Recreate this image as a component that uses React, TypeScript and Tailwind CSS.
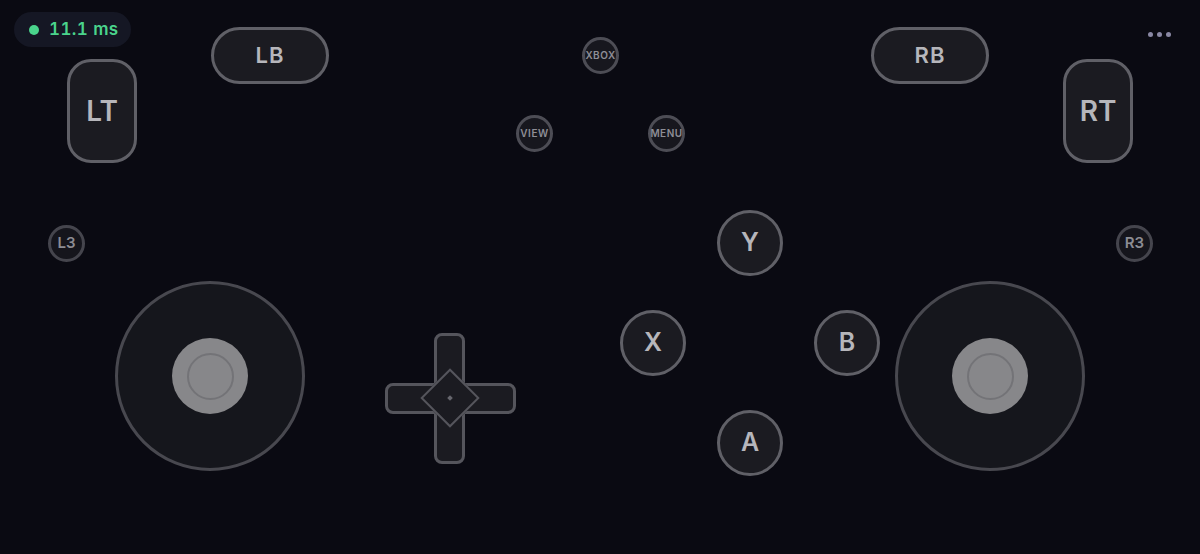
import React from "react";

const font = { fontFamily: "Inter, 'Noto Sans', sans-serif" };

const face =
  "flex h-[66px] w-[66px] items-center justify-center rounded-full border-[3px] border-[#606067] bg-[#1b1b21] text-[25px] font-semibold text-[#b6b6bb]";
const small =
  "flex h-[37px] w-[37px] items-center justify-center rounded-full border-[3px] border-[#4d4d55] bg-[#17171e] text-[10px] font-semibold tracking-[0.5px] text-[#8e8e96]";
const stickBtn =
  "flex h-[37px] w-[37px] items-center justify-center rounded-full border-[3px] border-[#45454d] bg-[#15151c] text-[15px] font-semibold text-[#8c8c93]";
const bumper =
  "flex h-[57px] w-[118px] items-center justify-center rounded-full border-[3px] border-[#606067] bg-[#1b1b21] text-[22px] font-semibold tracking-[1px] text-[#b6b6bb]";
const trigger =
  "flex h-[104px] w-[70px] items-center justify-center rounded-[24px] border-[3px] border-[#606067] bg-[#1b1b21] text-[28px] font-semibold text-[#b6b6bb]";

function Stick() {
  return (
    <div className="flex h-[190px] w-[190px] items-center justify-center rounded-full border-[3px] border-[#48484f] bg-[#15161c]">
      <div className="flex h-[76px] w-[76px] items-center justify-center rounded-full bg-[#87878a]">
        <div className="h-[47px] w-[47px] rounded-full border-2 border-[#737377]" />
      </div>
    </div>
  );
}

export default function App() {
  return (
    <div
      className="relative h-[554px] w-[1200px] overflow-hidden bg-[#0a0a12]"
      style={font}
    >
      {/* latency pill */}
      <div className="absolute left-[14px] top-[12px] flex h-[35px] w-[117px] items-center gap-[10px] rounded-full bg-[#151724] pl-[15px]">
        <div className="h-[10px] w-[10px] rounded-full bg-[#4ad48c]" />
        <span className="text-[17px] font-semibold tabular-nums tracking-[0.4px] text-[#4ad48c]">
          11.1 ms
        </span>
      </div>

      {/* more dots */}
      <div className="absolute left-[1148px] top-[32px] flex gap-[4px]">
        <div className="h-[5px] w-[5px] rounded-full bg-[#8a88a4]" />
        <div className="h-[5px] w-[5px] rounded-full bg-[#8a88a4]" />
        <div className="h-[5px] w-[5px] rounded-full bg-[#8a88a4]" />
      </div>

      {/* left shoulder */}
      <div className="absolute left-[67px] top-[27px] flex items-start gap-[74px]">
        <div className="mt-[32px]">
          <div className={trigger}>LT</div>
        </div>
        <div className={bumper}>LB</div>
      </div>

      {/* right shoulder */}
      <div className="absolute left-[871px] top-[27px] flex items-start gap-[74px]">
        <div className={bumper}>RB</div>
        <div className="mt-[32px]">
          <div className={trigger}>RT</div>
        </div>
      </div>

      {/* system buttons */}
      <div className="absolute left-[516px] top-[37px] grid grid-cols-[37px_37px_37px] gap-x-[29px] gap-y-[41px]">
        <div />
        <div className={small}>XBOX</div>
        <div />
        <div className={small}>VIEW</div>
        <div />
        <div className={small}>MENU</div>
      </div>

      {/* stick buttons */}
      <div className="absolute left-[48px] top-[225px] flex w-[1105px] justify-between">
        <div className={stickBtn}>L3</div>
        <div className={stickBtn}>R3</div>
      </div>

      {/* face buttons */}
      <div className="absolute left-[620px] top-[210px] grid grid-cols-[66px_66px_66px] gap-x-[31px] gap-y-[34px]">
        <div />
        <div className={face}>Y</div>
        <div />
        <div className={face}>X</div>
        <div />
        <div className={face}>B</div>
        <div />
        <div className={face}>A</div>
        <div />
      </div>

      {/* sticks */}
      <div className="absolute left-[115px] top-[281px] flex w-[970px] justify-between">
        <Stick />
        <Stick />
      </div>

      {/* d-pad */}
      <div className="absolute left-[385px] top-[333px] h-[131px] w-[131px]">
        <div className="absolute left-0 top-[50px] h-[31px] w-[131px] rounded-[8px] border-[3px] border-[#55555c] bg-[#1b1b21]" />
        <div className="absolute left-[49px] top-0 h-[131px] w-[31px] rounded-[8px] border-[3px] border-[#55555c] bg-[#1b1b21]" />
        <div className="absolute left-[44px] top-[44px] flex h-[42px] w-[42px] rotate-45 items-center justify-center border-[2px] border-[#55555c] bg-[#1b1b21]">
          <div className="h-[4px] w-[4px] bg-[#66666d]" />
        </div>
      </div>
    </div>
  );
}
